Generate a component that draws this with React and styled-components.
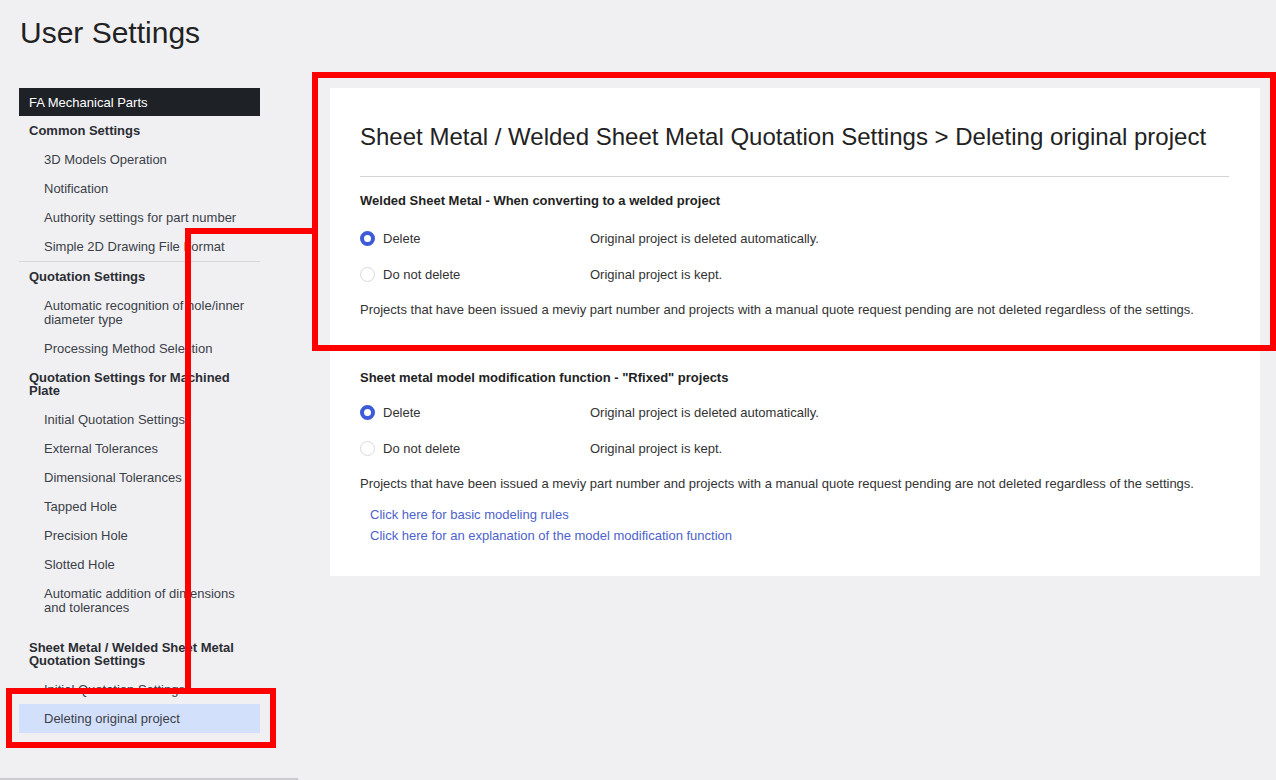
import React from "react";
import styled, { createGlobalStyle } from "styled-components";

const GlobalStyle = createGlobalStyle`
  html, body {
    margin: 0;
    padding: 0;
    background: #f0f0f3;
  }
  body {
    font-family: "Liberation Sans", Arial, sans-serif;
    color: #333;
  }
  * { box-sizing: border-box; }
`;

const Page = styled.div`
  position: relative;
  display: flex;
  flex-direction: column;
  height: 780px;
  overflow: hidden;
`;

const PageTitle = styled.h1`
  margin: 15px 0 0 20px;
  font-size: 30px;
  line-height: 36px;
  font-weight: 400;
  color: #222;
`;

const Body = styled.div`
  flex: 1;
  display: flex;
  margin-top: 37px;
`;

const Aside = styled.aside`
  width: 298px;
  flex-shrink: 0;
  padding-left: 19px;
  border-bottom: 2px solid #cbcbcf;
`;

const Nav = styled.nav`
  width: 241px;
  display: flex;
  flex-direction: column;
`;

const NavRoot = styled.div`
  height: 28px;
  padding-left: 10px;
  display: flex;
  align-items: center;
  background: #1e2126;
  color: #fff;
  font-size: 13px;
`;

const NavGroup = styled.div`
  display: flex;
  flex-direction: column;
  border-top: ${(p) => (p.$divider ? "1px solid #d6d6da" : "none")};
  margin-top: ${(p) => p.$gap || 0}px;
`;

const GroupTitle = styled.div`
  padding: 8px 20px 8px 10px;
  font-size: 13px;
  line-height: 13px;
  font-weight: 700;
  color: #2b2d33;
`;

const NavItem = styled.a`
  display: block;
  padding: 7.5px 8px 7.5px 25px;
  font-size: 13px;
  line-height: 14px;
  color: #3b3f47;
  text-decoration: none;
  background: ${(p) => (p.$active ? "#d3e0fc" : "transparent")};
`;

const Main = styled.main`
  flex: 1;
  padding: 0 16px 0 32px;
`;

const Card = styled.section`
  background: #fff;
  padding: 35px 31px 30px 30px;
`;

const CardTitle = styled.h2`
  margin: 0;
  font-size: 24px;
  line-height: 28px;
  font-weight: 400;
  color: #222;
`;

const Rule = styled.hr`
  margin: 25px 0 16px;
  border: none;
  border-top: 1px solid #d4d4d8;
`;

const Section = styled.div`
  & + & {
    margin-top: 52px;
  }
`;

const SectionTitle = styled.h3`
  margin: 0 0 ${(p) => (p.$tight ? 8 : 11)}px;
  font-size: 13px;
  line-height: 16px;
  font-weight: 700;
  color: #222;
`;

const OptionRow = styled.label`
  display: flex;
  align-items: center;
  height: 36px;
  font-size: 13px;
  color: #333;
`;

const OptionName = styled.span`
  display: flex;
  align-items: center;
  gap: 8px;
  width: 230px;
`;

const Radio = styled.span`
  width: 15px;
  height: 15px;
  border-radius: 50%;
  flex-shrink: 0;
  background: #fff;
  border: ${(p) => (p.$checked ? "4px solid #3d5bd9" : "1px solid #d9d9dc")};
`;

const Note = styled.p`
  margin: 10px 0 0;
  font-size: 13px;
  line-height: 16px;
  color: #333;
`;

const Links = styled.div`
  display: flex;
  flex-direction: column;
  margin-top: 12px;
  padding-left: 10px;
`;

const HelpLink = styled.a`
  font-size: 13px;
  line-height: 21px;
  color: #4d62cc;
  text-decoration: none;
`;

// red markers drawn on top of the page
const Marker = styled.div`
  position: absolute;
  border: 6px solid #ff0000;
  pointer-events: none;
`;

const MarkerLine = styled.div`
  position: absolute;
  background: #ff0000;
  pointer-events: none;
`;

const menu = [
  {
    title: "Common Settings",
    items: [
      "3D Models Operation",
      "Notification",
      "Authority settings for part number",
      "Simple 2D Drawing File Format",
    ],
  },
  {
    title: "Quotation Settings",
    divider: true,
    items: [
      "Automatic recognition of hole/inner diameter type",
      "Processing Method Selection",
    ],
  },
  {
    title: "Quotation Settings for Machined Plate",
    items: [
      "Initial Quotation Settings",
      "External Tolerances",
      "Dimensional Tolerances",
      "Tapped Hole",
      "Precision Hole",
      "Slotted Hole",
      "Automatic addition of dimensions and tolerances",
    ],
  },
  {
    title: "Sheet Metal / Welded Sheet Metal Quotation Settings",
    gap: 11,
    items: ["Initial Quotation Settings", "Deleting original project"],
    active: "Deleting original project",
  },
];

const NOTE =
  "Projects that have been issued a meviy part number and projects with a manual quote request pending are not deleted regardless of the settings.";

function DeleteOptions() {
  return (
    <>
      <OptionRow>
        <OptionName>
          <Radio $checked />
          Delete
        </OptionName>
        Original project is deleted automatically.
      </OptionRow>
      <OptionRow>
        <OptionName>
          <Radio />
          Do not delete
        </OptionName>
        Original project is kept.
      </OptionRow>
      <Note>{NOTE}</Note>
    </>
  );
}

export default function App() {
  return (
    <Page>
      <GlobalStyle />
      <PageTitle>User Settings</PageTitle>
      <Body>
        <Aside>
          <Nav>
            <NavRoot>FA Mechanical Parts</NavRoot>
            {menu.map((group) => (
              <NavGroup key={group.title} $divider={group.divider} $gap={group.gap}>
                <GroupTitle>{group.title}</GroupTitle>
                {group.items.map((item) => (
                  <NavItem key={item} $active={item === group.active}>
                    {item}
                  </NavItem>
                ))}
              </NavGroup>
            ))}
          </Nav>
        </Aside>
        <Main>
          <Card>
            <CardTitle>
              Sheet Metal / Welded Sheet Metal Quotation Settings &gt; Deleting original project
            </CardTitle>
            <Rule />
            <Section>
              <SectionTitle>Welded Sheet Metal - When converting to a welded project</SectionTitle>
              <DeleteOptions />
            </Section>
            <Section>
              <SectionTitle $tight>Sheet metal model modification function - "Rfixed" projects</SectionTitle>
              <DeleteOptions />
              <Links>
                <HelpLink href="#">Click here for basic modeling rules</HelpLink>
                <HelpLink href="#">Click here for an explanation of the model modification function</HelpLink>
              </Links>
            </Section>
          </Card>
        </Main>
      </Body>

      <Marker style={{ left: 312, top: 72, width: 964, height: 279 }} />
      <MarkerLine style={{ left: 185, top: 228, width: 128, height: 6 }} />
      <MarkerLine style={{ left: 185, top: 228, width: 6, height: 462 }} />
      <Marker style={{ left: 6, top: 688, width: 270, height: 60 }} />
    </Page>
  );
}
